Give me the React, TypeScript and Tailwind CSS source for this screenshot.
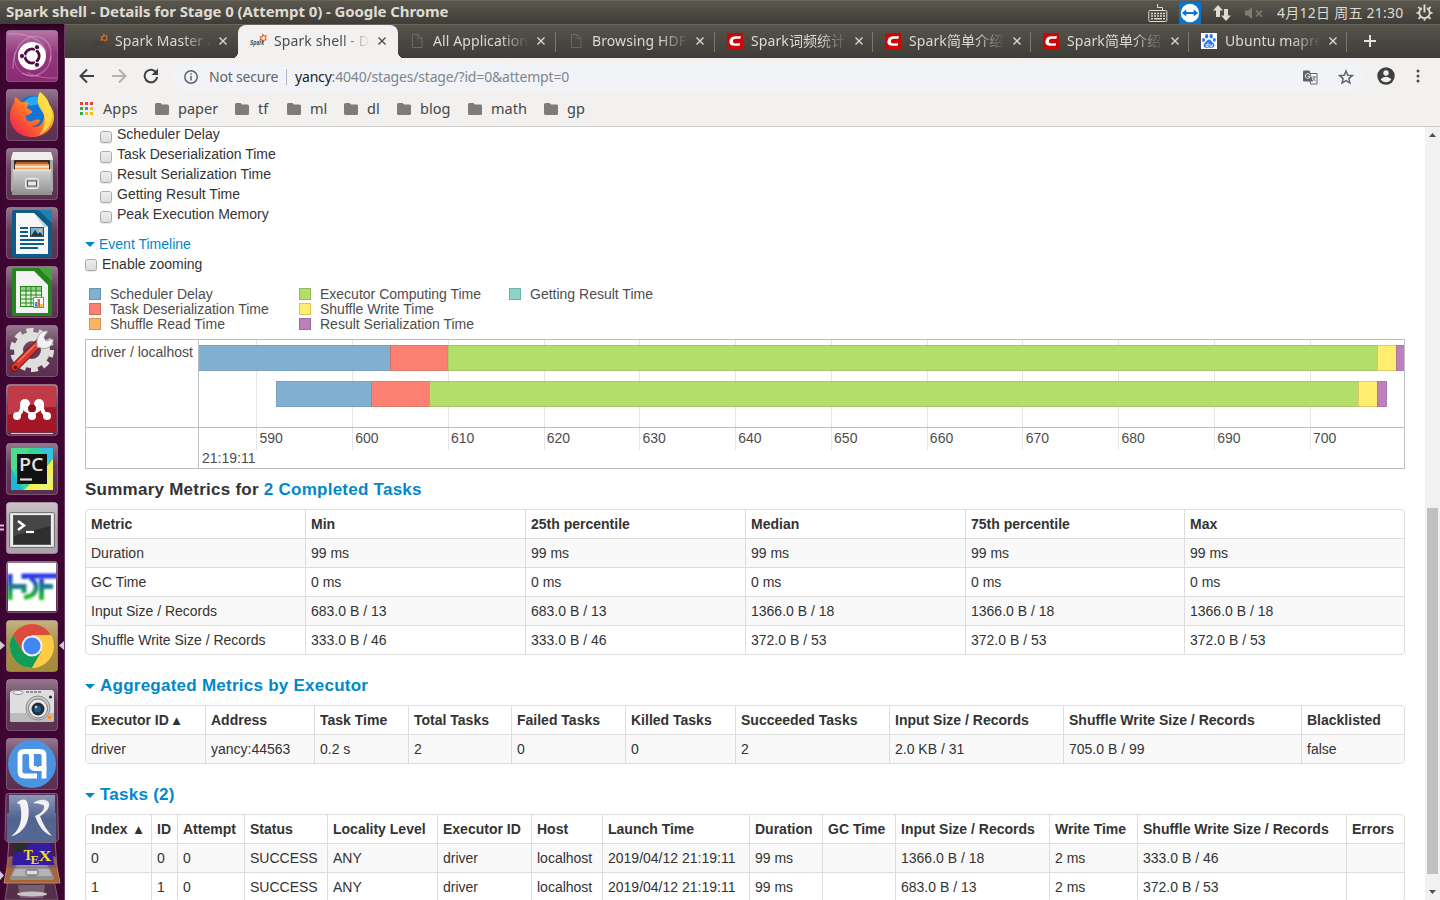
import React from 'react';

const UI = "font-['Noto_Sans','Noto_Sans_CJK_SC',sans-serif]";

/* ---------- Launcher ---------- */

function Tile({ children, fill = '#5b2f50', shine = true }: { children: React.ReactNode; fill?: string; shine?: boolean }) {
  const id = React.useId().replace(/[^a-zA-Z0-9]/g, '');
  return (
    <svg width="52" height="52" viewBox="0 0 52 52" className="block shrink-0">
      <defs>
        <linearGradient id={id} x1="0" y1="0" x2="0" y2="1">
          <stop offset="0" stopColor="#fff" stopOpacity={shine ? 0.35 : 0.1} />
          <stop offset="0.45" stopColor="#fff" stopOpacity="0.06" />
          <stop offset="1" stopColor="#fff" stopOpacity="0" />
        </linearGradient>
      </defs>
      <rect x="0.5" y="0.5" width="51" height="51" rx="3" fill={fill} />
      <rect x="0.5" y="0.5" width="51" height="51" rx="3" fill={`url(#${id})`} stroke="#fff" strokeOpacity="0.25" />
      {children}
    </svg>
  );
}

function UbuntuIcon() {
  return (
    <Tile fill="#8d2b74">
      <g fill="none" stroke="#dba6cd" strokeOpacity="0.45">
        <path d="M7 39C7 12 23 3 36 8c8 4 10 13 8 23" strokeWidth="1.5" />
        <path d="M2 4c18-2 34 5 38 18M16 43c14 8 28-2 29-17" strokeWidth="1.5" />
        <path d="M9 22c-4 16 9 27 24 23M21 42c8 5 16 6 30 6" />
      </g>
      <circle cx="26" cy="26" r="14" fill="#fff" />
      <circle cx="26" cy="26" r="7.2" fill="none" stroke="#4e0c3f" strokeWidth="2.8" />
      <path d="M26 26L12 26M26 26L33 14M26 26L33 38" stroke="#fff" strokeWidth="1.2" />
      <g fill="#4e0c3f" stroke="#fff" strokeWidth="0.9">
        <circle cx="16" cy="26" r="2.6" />
        <circle cx="31" cy="17.2" r="2.6" />
        <circle cx="31" cy="34.8" r="2.6" />
      </g>
    </Tile>
  );
}

function FirefoxIcon() {
  return (
    <Tile>
      <defs>
        <linearGradient id="ffx" x1="1" y1="0" x2="0.1" y2="0.9">
          <stop offset="0" stopColor="#fff44f" />
          <stop offset="0.35" stopColor="#ffb821" />
          <stop offset="0.62" stopColor="#ff6a2b" />
          <stop offset="1" stopColor="#f0264e" />
        </linearGradient>
      </defs>
      <circle cx="27" cy="22" r="15.5" fill="#1273d8" />
      <path d="M18 13c4-5 11-7 17-4l-2 6-8 2z" fill="#2aa7f0" />
      <path d="M34 3c6 5 8 8 9 12 2 3 5 7 5 13 0 12-10 20-22 20C13 48 4 39 4 27c0-6 2-10 4-13l1-6c3 1 4 3 6 5 3 0 6 0 8 1l-2 5 5 3c1 2-3 4-6 4-1 4 2 7 6 6 3-1 5-2 8-1-1 4-5 6-9 6 8 3 14-3 13-12-1-6-6-9-6-15 0-3 1-5 2-7z" fill="url(#ffx)" />
      <path d="M34 3c6 5 8 8 9 12 3 6 4 13 1 20-2 5-6 9-11 11 5-6 8-14 4-22-3-5-6-8-5-14 0-3 1-5 2-7z" fill="#ffe14a" opacity="0.85" />
    </Tile>
  );
}

function FilesIcon() {
  return (
    <Tile>
      <defs>
        <linearGradient id="cab" x1="0" y1="0" x2="0" y2="1">
          <stop offset="0" stopColor="#d2d2d0" />
          <stop offset="1" stopColor="#8f8f8d" />
        </linearGradient>
      </defs>
      <path d="M7 4h38l2 5v34l-2 2H7l-2-2V9z" fill="#a9a9a7" />
      <path d="M7 4h38l2 8H5z" fill="#eeeeec" />
      <path d="M8 12h36v12H8z" fill="#3c2c28" />
      <path d="M10 14h32v3H10z" fill="#b95a2d" />
      <path d="M9 16h34v7H9z" fill="#f0a560" />
      <path d="M9 18h34v1.500H9z" fill="#fff0dc" />
      <path d="M7 22h38l1 25H6z" fill="url(#cab)" />
      <path d="M7 22h38" stroke="#f4f4f4" />
      <rect x="19.500" y="30.500" width="13" height="10" rx="2" fill="#c4c4c2" stroke="#f2f2f2" />
      <rect x="21.500" y="33" width="9" height="5" fill="#e8e8e8" stroke="#555" />
    </Tile>
  );
}

function WriterIcon() {
  return (
    <Tile>
      <path d="M8 3h25l13 13v34H8q-2 0-2-2V5q0-2 2-2z" fill="#0f5c87" />
      <path d="M33 3h13v13z" fill="#1f7fb0" />
      <path d="M10 6h18l14 14v27H10z" fill="#f6f6f6" />
      <path d="M28 6l14 14h-4z" fill="#c4d4de" />
      <g stroke="#0f5c87" strokeWidth="1.800">
        <path d="M14 21h8M14 25h8M14 29h8M14 33h24M14 37h24M14 41h18" />
      </g>
      <rect x="24.500" y="20.500" width="13" height="9" fill="#78b4da" stroke="#24506b" />
      <path d="M25 29l4-6 3 4 2-2 3 4z" fill="#333" />
      <circle cx="34" cy="23.500" r="1.500" fill="#f6c23e" />
    </Tile>
  );
}

function CalcIcon() {
  return (
    <Tile>
      <path d="M8 2h25l13 14v34H8q-2 0-2-2V4q0-2 2-2z" fill="#27851f" />
      <path d="M33 2h13v13z" fill="#42a63a" />
      <path d="M10 5h18l14 14v28H10z" fill="#f3f3f3" />
      <rect x="14.500" y="20.500" width="21" height="20" fill="#ddf4d3" stroke="#27851f" />
      <rect x="15" y="21" width="20" height="4" fill="#8ad07e" />
      <path d="M14 25h22M14 29h22M14 33h22M14 37h22M20 20v21M25 20v21M30 20v21" stroke="#27851f" />
      <rect x="27.500" y="31.500" width="10" height="10" fill="#fff" stroke="#888" />
      <path d="M30 41v-5" stroke="#2a9bd8" strokeWidth="2.500" />
      <path d="M32.800 41v-8" stroke="#e8662a" strokeWidth="2.500" />
      <path d="M35.500 41v-3" stroke="#f2b72a" strokeWidth="2.500" />
    </Tile>
  );
}

function SettingsIcon() {
  return (
    <Tile>
      <circle cx="26" cy="25" r="13.500" fill="none" stroke="#dededc" strokeWidth="9" />
      <circle cx="26" cy="25" r="19.500" fill="none" stroke="#dededc" strokeWidth="5" strokeDasharray="7 5.250" />
      <path d="M8 43L36 15" stroke="#8c1616" strokeWidth="8.500" strokeLinecap="round" />
      <path d="M9 42L32 19" stroke="#d8352c" strokeWidth="6.500" strokeLinecap="round" />
      <path d="M12 37L29 20" stroke="#f07b6e" strokeWidth="1.500" strokeLinecap="round" />
      <circle cx="9.500" cy="42.500" r="1.700" fill="#5c0d0d" />
      <path d="M31 18c-1-7 5-13 11-12l-4 6 2 4 7-2c1 7-7 11-12 9l-4-1z" fill="#f3f3f3" stroke="#9a9a98" strokeWidth="0.800" />
    </Tile>
  );
}

function MendeleyIcon() {
  return (
    <Tile fill="#6b3049">
      <rect x="2" y="2" width="48" height="46" rx="3" fill="#a51727" />
      <path d="M2 5q0-3 3-3h42q3 0 3 3v18Q26 23 2 31z" fill="#c03a47" />
      <path d="M5 49.500h42" stroke="#d8cbd0" />
      <path d="M11 31q5-2 5-8 0-5 4-6M41 31q-5-2-5-8 0-5-4-6" stroke="#fff" strokeWidth="4" fill="none" />
      <circle cx="19" cy="20" r="5" fill="#fff" />
      <circle cx="33" cy="20" r="5" fill="#fff" />
      <path d="M15 20l3 7 8 5 8-5 3-7-6 2-5 5-5-5z" fill="#fff" />
      <circle cx="26" cy="24.500" r="4" fill="#8a101f" />
      <circle cx="11" cy="32" r="4" fill="#fff" />
      <circle cx="26" cy="32" r="4" fill="#fff" />
      <circle cx="41" cy="32" r="4" fill="#fff" />
    </Tile>
  );
}

function PyCharmIcon() {
  return (
    <Tile>
      <path d="M5 5h42v42H5z" fill="#33d3a2" />
      <path d="M5 5h20L5 32z" fill="#4bdc8e" />
      <path d="M5 25l12 22H5z" fill="#1fb7d6" />
      <path d="M34 5h13v20z" fill="#34c1e4" />
      <path d="M47 16v31H18l20-20z" fill="#f6ee4d" />
      <path d="M40 36l7-9v10l-7 10h-12z" fill="#e9f27b" />
      <rect x="11" y="11" width="30" height="30" fill="#111" />
      <text x="13" y="27.500" fontFamily="Open Sans" fontWeight="600" fontSize="17.500" textLength="24.500" lengthAdjust="spacingAndGlyphs" fill="#e0e0e0">PC</text>
      <path d="M14 36.500h12" stroke="#ddd" strokeWidth="2.200" />
    </Tile>
  );
}

function TerminalIcon() {
  return (
    <Tile fill="#aba3a9">
      <rect x="3.500" y="10.500" width="45" height="35" rx="1" fill="#d9d9d9" stroke="#777" />
      <rect x="5" y="12" width="42" height="32" fill="#efefef" />
      <rect x="7.500" y="13.500" width="37" height="29" fill="#2e2e2e" stroke="#555" />
      <path d="M8 14h36v10L8 34z" fill="#464646" />
      <path d="M12 19l6 4.500-6 4.500" fill="none" stroke="#fff" strokeWidth="2.500" />
      <path d="M20 30h8" stroke="#fff" strokeWidth="2.200" />
    </Tile>
  );
}

function HdfIcon() {
  return (
    <Tile>
      <defs>
        <linearGradient id="hdf" gradientUnits="userSpaceOnUse" x1="0" y1="13" x2="0" y2="38">
          <stop offset="0" stopColor="#2c2ff0" />
          <stop offset="0.300" stopColor="#2a55cc" />
          <stop offset="0.550" stopColor="#1f8580" />
          <stop offset="1" stopColor="#22c41c" />
        </linearGradient>
        <filter id="soft" filterUnits="userSpaceOnUse" x="0" y="0" width="52" height="52"><feGaussianBlur stdDeviation="0.800" /></filter>
        <clipPath id="hdfclip"><rect x="2" y="2" width="48" height="48" /></clipPath>
      </defs>
      <rect x="2" y="2" width="48" height="48" fill="#fff" />
      <g clipPath="url(#hdfclip)">
        <g filter="url(#soft)" fill="none" stroke="url(#hdf)" strokeWidth="5">
          <path d="M4 13v26M4 25.500h15M18 23v9" />
          <path d="M15.500 15.100L52 15M18 14v4" />
          <path d="M24 17q6 3 6 9 0 9-12 10.500" strokeWidth="4.500" />
          <path d="M35.500 18v21M35 25.600L47 25.500" />
        </g>
      </g>
    </Tile>
  );
}

function ChromeIcon() {
  return (
    <Tile fill="#a48b3c">
      <circle cx="26" cy="26" r="22" fill="#fbc93c" />
      <path d="M6.900 15A22 22 0 0 1 45 15H26z" fill="#dd4b3e" />
      <path d="M6.900 15L16.500 31.500 26 26V15H7z" fill="#dd4b3e" />
      <path d="M6.900 15A22 22 0 0 0 26 48l9.500-16.500L26 26l-9.500 5.500z" fill="#119d57" />
      <path d="M45 16H26v10l9.500 5.500L26 48A22 22 0 0 0 45 16z" fill="#fecb42" />
      <circle cx="26" cy="26" r="10.500" fill="#f1f1f1" />
      <circle cx="26" cy="26" r="8.500" fill="#4285f4" />
    </Tile>
  );
}

function CameraIcon() {
  return (
    <Tile>
      <path d="M5 12l5-1h35q3 0 3 3v27q0 2-3 2H7q-3 0-3-2V14z" fill="#dedede" />
      <path d="M4 34h44v7q0 2-3 2H7q-3 0-3-2z" fill="#bcbcbc" />
      <path d="M7 14h10M20 13h16" stroke="#777" strokeWidth="1.500" strokeDasharray="3 1" />
      <ellipse cx="12" cy="13.500" rx="5" ry="2" fill="#f4f4f4" stroke="#888" />
      <circle cx="32" cy="29" r="12" fill="#c9c9c9" stroke="#8c8c8c" />
      <circle cx="32" cy="29.500" r="9.500" fill="#e9e9e9" stroke="#777" />
      <circle cx="32" cy="30" r="6.500" fill="#252d38" />
      <circle cx="31.500" cy="30" r="3.500" fill="#245b8e" />
      <circle cx="30" cy="28" r="1.200" fill="#b9dcf5" />
      <circle cx="44.500" cy="18" r="1.500" fill="#222" />
      <rect x="42" y="37" width="3" height="3" fill="#f39422" />
    </Tile>
  );
}

function MLogoIcon() {
  return (
    <Tile>
      <circle cx="26" cy="26" r="24" fill="#4a93e2" />
      <path d="M31 38H18.500Q14 38 14 33.500V17.500Q14 13.500 18 13.500H21.500Q25.500 13.500 25.500 17.500V27.500Q25.500 30.500 28.500 30.500H38V17.500Q38 13.500 34 13.500H21" fill="none" stroke="#fff" strokeWidth="4.800" />
      <path d="M38 28V40.500" stroke="#fff" strokeWidth="4.800" />
      <path d="M32 20v9" stroke="#4a93e2" strokeWidth="2" />
    </Tile>
  );
}

function LauncherStack() {
  return (
    <svg width="64" height="108" viewBox="0 0 64 108" className="block shrink-0">
      <defs>
        <linearGradient id="jr" x1="0" y1="0" x2="0" y2="1">
          <stop offset="0" stopColor="#8c98b8" />
          <stop offset="0.500" stopColor="#52648f" />
          <stop offset="1" stopColor="#556994" />
        </linearGradient>
      </defs>
      <path d="M8 88h46l4 20H5z" fill="#54304d" stroke="#7b5b72" />
      <path d="M18 93h27l-2 13H20z" fill="#75606f" />
      <ellipse cx="32" cy="102" rx="15" ry="2.500" fill="#c9c3c7" />
      <path d="M9 65h46l5 26H4z" fill="#a4643c" stroke="#c2865a" />
      <path d="M16 73h32l6 12v3H10v-3z" fill="#8f8f8d" />
      <path d="M17 73h30l5 11H12z" fill="#b4b4b2" />
      <rect x="26" y="78" width="12" height="5" rx="1.500" fill="#ddd" stroke="#555" />
      <path d="M9 48h46l2 28H7z" fill="#6b405f" fillOpacity="0.350" stroke="#8a6580" />
      <path d="M14 51h37l3 22H12z" fill="#321ca0" />
      <path d="M14 51l18-2-8 9-11 4z" fill="#26302b" />
      <g fontFamily="Liberation Serif" fontWeight="700" fill="#f5db25">
        <text x="23.500" y="68" fontSize="14">T</text>
        <text x="30.500" y="71.500" fontSize="13">E</text>
        <text x="38.500" y="69" fontSize="14" textLength="13" lengthAdjust="spacingAndGlyphs">X</text>
      </g>
      <path d="M8.500 1.500h47q2 0 2 2l1 44-3 3H8l-3-3 1-44q0-2 2.500-2z" fill="#5b2f50" stroke="#81617a" />
      <path d="M9 3h46v18h1v29H7V21h2z" fill="url(#jr)" />
      <path d="M20 8.500q5-2.500 7 1c4 12 2 30-16 35 10-7 12-20 9-32q-3-1-3-2z" fill="#f3f3f3" />
      <path d="M33 11c9-6 18-3 16 3-1 4-5 8-9 10 3 8 6 13 12 20-9-3-13-10-17-20 6-2 10-7 9-10-1-2-5-2-11-3z" fill="#f0f0f0" />
      <path d="M0 79l4 4.500L0 88z" fill="#d4c8d0" />
    </svg>
  );
}

function Launcher() {
  return (
    <aside className="relative flex w-[65px] shrink-0 flex-col overflow-hidden border-r border-[#6b3a62] bg-[#3f0533] shadow-[inset_0_8px_8px_-6px_#1c0217]">
      <div className="flex flex-col items-start gap-[7px] pt-1.5 pl-1.5">
        <UbuntuIcon />
        <FirefoxIcon />
        <FilesIcon />
        <WriterIcon />
        <CalcIcon />
        <SettingsIcon />
        <MendeleyIcon />
        <PyCharmIcon />
        <TerminalIcon />
        <HdfIcon />
        <ChromeIcon />
        <CameraIcon />
        <MLogoIcon />
      </div>
      <div className="mt-0.5">
        <LauncherStack />
      </div>
      <svg className="absolute left-0 top-[498px]" width="5" height="10">
        <path d="M0 3.500h4M0 7.500h4" stroke="#d4c8d0" strokeWidth="2" />
      </svg>
      <svg className="absolute left-0 top-[617px]" width="64" height="10">
        <path d="M0 0l5 4.500L0 9zM64 0l-5 4.500L64 9z" fill="#d4c8d0" />
      </svg>
    </aside>
  );
}

/* ---------- Desktop top panel ---------- */

function TopPanel() {
  return (
    <header className={`flex h-6 shrink-0 items-center justify-between border-t border-[#68645a] bg-linear-to-b from-[#5a574d] to-[#3e3d38] pl-1.5 ${UI}`}>
      <h1 className="mb-[3px] text-[15px] leading-5 font-bold tracking-[-0.09px] whitespace-nowrap text-[#dfdbd2]">
        Spark shell - Details for Stage 0 (Attempt 0) - Google Chrome
      </h1>
      <div className="flex h-[23px] w-[292px] items-center text-[#dfdbd2]">
        <svg width="20" height="20" viewBox="0 0 20 20" fill="none" stroke="currentColor" className="shrink-0">
          <rect x="0.800" y="7.500" width="18" height="11" rx="1" />
          <path d="M3 10.500h14M3 13h14" strokeWidth="1.600" strokeDasharray="2 1" />
          <path d="M3 15.800h2M6 15.800h8M15 15.800h2" strokeWidth="1.600" />
          <path d="M14.500 7.500V4.500h-5V1" />
        </svg>
        <svg width="22" height="22" viewBox="0 0 22 22" className="ml-[11px] shrink-0">
          <rect width="22" height="22" fill="#0c72cf" />
          <circle cx="11" cy="11" r="9.200" fill="#fff" />
          <path d="M2.800 11l4.500-3.500V10h7.400V7.500l4.500 3.500-4.500 3.500V12H7.300v2.500z" fill="#0c72cf" />
        </svg>
        <svg width="18" height="18" viewBox="0 0 18 18" className="ml-3 shrink-0" fill="currentColor">
          <path d="M5 1l5 5.500H7V13H3V6.500H0zM13 17l5-5.500h-3V5h-4v6.500H8z" />
        </svg>
        <svg width="18" height="14" viewBox="0 0 18 14" className="ml-3.5 shrink-0 text-[#7f7c74]" fill="currentColor">
          <path d="M0 4.500h3L7 1v12L3 9.500H0z" />
          <path d="M11 4.500l6 6M17 4.500l-6 6" stroke="currentColor" strokeWidth="1.600" />
        </svg>
        <span className="ml-3.5 w-[139px] text-[14px] leading-[22px] tracking-[0.25px] whitespace-nowrap">4月12日 周五 21:30</span>
        <svg width="17" height="17" viewBox="0 0 17 17" className="shrink-0" fill="none" stroke="currentColor">
          <path d="M5.900 4.200a5.300 5.300 0 1 0 5.200 0" strokeWidth="1.900" />
          <path d="M8.500 0.500v8" strokeWidth="2" />
          <path d="M2.300 2.800l2 2M14.700 2.800l-2 2M0.500 8.800h2.500M14 8.800h2.500M2.500 14.800l2-2M14.500 14.800l-2-2M8.500 14.300v2.500" strokeWidth="1.800" />
        </svg>
      </div>
    </header>
  );
}

/* ---------- Browser chrome ---------- */

function SparkFav() {
  return (
    <svg width="16" height="16" viewBox="0 0 16 16" className="shrink-0 overflow-visible">
      <path d="M10.300 3.800l1.900.2.500-2.500 1.600 1.700 1.700-.4-.6 2.300.8 1.700-2.200.3-1 1.500-.8-1.800-2.200.2 1-1.600z" fill="none" stroke="#e0672f" strokeWidth="1.100" />
      <text x="0" y="12" fontFamily="Liberation Sans" fontStyle="italic" fontWeight="700" fontSize="7.500" textLength="14" lengthAdjust="spacingAndGlyphs" fill="#3f3f3f">Spark</text>
    </svg>
  );
}

function PageFav() {
  return (
    <svg width="16" height="16" viewBox="0 0 16 16" fill="none" stroke="#6b6964" className="shrink-0">
      <path d="M3.500 1.500h6l3.500 3.500v9.500H3.500zM9 1.500V5.500h4" />
    </svg>
  );
}

function CsdnFav() {
  return (
    <svg width="16" height="16" viewBox="0 0 16 16" className="shrink-0">
      <rect width="16" height="16" fill="#ca0606" />
      <path d="M14 3.200l-.7 2.600H9.200Q6.200 5.800 5.900 8T8.400 10.400l4.800-.1-.6 2.500H7.500Q2.200 12.800 2.400 8.400 3 3.200 8.800 3.200z" fill="#fff" />
    </svg>
  );
}

function BaiduFav() {
  return (
    <svg width="16" height="16" viewBox="0 0 16 16" className="shrink-0">
      <rect width="16" height="16" fill="#fff" />
      <g fill="#2a78f0">
        <ellipse cx="5.600" cy="3.200" rx="1.600" ry="2.200" />
        <ellipse cx="10.200" cy="3.200" rx="1.600" ry="2.200" />
        <ellipse cx="2.500" cy="7" rx="1.500" ry="1.900" />
        <ellipse cx="13.300" cy="6.800" rx="1.500" ry="1.900" />
        <path d="M8 6.500c2 0 2.500 2 4 3.300 2.500 2 1.500 5-1 5-1.300 0-2-.3-3-.3s-1.700.3-3 .3c-2.500 0-3.500-3-1-5C5.500 8.500 6 6.500 8 6.500z" />
      </g>
      <path d="M7 9.500v4H5.800q-1 0-1-1t1-1H7M9 11v1.700q0 .8.700.8h1.500V11" fill="none" stroke="#fff" strokeWidth="0.900" />
    </svg>
  );
}

type TabInfo = { title: string; icon: React.ReactNode; width: string; active?: boolean; divider?: boolean };

const tabs: TabInfo[] = [
  { title: 'Spark Master at', icon: <SparkFav />, width: 'w-[159px]' },
  { title: 'Spark shell - De', icon: <SparkFav />, width: 'w-[160px] -mr-px', active: true },
  { title: 'All Applications', icon: <PageFav />, width: 'w-[159px]', divider: true },
  { title: 'Browsing HDFS', icon: <PageFav />, width: 'w-[159px]', divider: true },
  { title: 'Spark词频统计', icon: <CsdnFav />, width: 'w-[158px]', divider: true },
  { title: 'Spark简单介绍', icon: <CsdnFav />, width: 'w-[158px]', divider: true },
  { title: 'Spark简单介绍', icon: <CsdnFav />, width: 'w-[158px]', divider: true },
  { title: 'Ubuntu mapred', icon: <BaiduFav />, width: 'w-[158px]', divider: true },
];

function Tab({ tab }: { tab: TabInfo }) {
  const tone = tab.active ? 'rounded-t-lg bg-[#f2f1f0] text-[#4c4c4c]' : 'text-[#dcd9d1]';
  return (
    <div className={`relative flex h-[34px] shrink-0 items-center pb-px pl-3 ${tab.width} ${tone}`}>
      {tab.icon}
      <span className="ml-2 w-[96px] overflow-hidden mask-r-from-70% mask-r-to-100% text-[14px] leading-5 tracking-[0.1px] whitespace-nowrap">
        {tab.title}
      </span>
      <svg width="8" height="8" viewBox="0 0 8 8" className="ml-[7.5px] shrink-0">
        <path d="M0.500 0.500l7 7M7.500 0.500l-7 7" stroke="currentColor" strokeWidth="1.350" />
      </svg>
      {tab.divider && <i className="absolute top-[7px] right-0 h-5 w-px bg-[#7b786e]" />}
      {tab.active && (
        <>
          <i className="absolute bottom-0 -left-2 size-2 bg-[radial-gradient(circle_at_0_0,transparent_8px,#f2f1f0_8.5px)]" />
          <i className="absolute -right-2 bottom-0 size-2 bg-[radial-gradient(circle_at_100%_0,transparent_8px,#f2f1f0_8.5px)]" />
        </>
      )}
    </div>
  );
}

function TabStrip() {
  return (
    <div className={`flex h-[34px] items-center border-t border-[#6a675d] bg-linear-to-b from-[#57544b] to-[#3e3c38] pl-3.5 ${UI}`}>
      {tabs.map((t, i) => (
        <Tab key={i} tab={t} />
      ))}
      <svg width="12" height="12" viewBox="0 0 12 12" className="mb-px ml-[17px]">
        <path d="M6 0v12M0 6h12" stroke="#e3e0d8" strokeWidth="2" />
      </svg>
    </div>
  );
}

function Toolbar() {
  return (
    <div className={`flex h-[37px] items-center bg-[#f2f1f0] pl-3.5 ${UI}`}>
      <svg width="16" height="16" viewBox="0 0 16 16" fill="none" stroke="#3f3f3f" strokeWidth="2" className="mb-px shrink-0">
        <path d="M15 8H2M8 1.500L1.500 8 8 14.500" />
      </svg>
      <svg width="16" height="16" viewBox="0 0 16 16" fill="none" stroke="#b1b0af" strokeWidth="2" className="mb-px ml-4 shrink-0">
        <path d="M1 8h13M8 1.500L14.500 8 8 14.500" />
      </svg>
      <svg width="16" height="16" viewBox="0 0 16 16" fill="none" stroke="#3f3f3f" strokeWidth="2" className="mb-px ml-4 shrink-0">
        <path d="M13.200 4.500A6.300 6.300 0 1 0 14.200 9" />
        <path d="M15 0.500v6.500H8.500z" fill="#3f3f3f" stroke="none" />
      </svg>
      <div className="mt-px ml-[15px] flex h-7 w-[1190px] shrink-0 items-center rounded-full bg-[#f1f3f6] pl-2.5">
        <svg width="14" height="14" viewBox="0 0 14 14" fill="none" stroke="#5f6368" strokeWidth="1.500" className="shrink-0">
          <circle cx="7" cy="7" r="6.200" />
          <path d="M7 6v4.500M7 3.300v1.500" />
        </svg>
        <span className="ml-[11px] w-[77px] text-[14px] leading-5 tracking-[-0.2px] whitespace-nowrap text-[#5f6368]">Not secure</span>
        <i className="h-4 w-px bg-[#b5b9bf]" />
        <span className="ml-2 grow text-[14px] leading-5 tracking-[-0.18px] whitespace-nowrap text-[#80868b]">
          <b className="font-normal text-[#202124]">yancy</b>:4040/stages/stage/?id=0&amp;attempt=0
        </span>
        <svg width="15" height="15" viewBox="0 0 15 15" className="mr-5 shrink-0">
          <path d="M6 3.500h8v10.500H7.500z" fill="#fff" stroke="#5f6368" />
          <path d="M1 0.500h5.500L10 11.500H1q-1 0-1-1v-9q0-1 1-1z" fill="#5f6368" />
          <path d="M7 4.800A2.400 2.400 0 1 0 7 7V6.200H4.800" fill="none" stroke="#f1f3f6" />
          <path d="M9 7h4M11 6v1M12.300 7q-.8 3-3 4M9.800 8q1 2 3 3.200" fill="none" stroke="#5f6368" strokeWidth="0.800" />
        </svg>
        <svg width="16" height="16" viewBox="0 0 24 24" fill="none" stroke="#5f6368" strokeWidth="2.200" className="mr-2.5 shrink-0">
          <path d="M12 3l2.600 6.300 6.900.6-5.200 4.500 1.600 6.700L12 17.500l-5.900 3.600 1.600-6.700L2.500 9.900l6.900-.6z" />
        </svg>
      </div>
      <svg width="18" height="18" viewBox="0 0 18 18" className="mb-px ml-auto shrink-0">
        <circle cx="9" cy="9" r="8.700" fill="#3f3f3f" />
        <circle cx="9" cy="6" r="2.700" fill="#f2f1f0" />
        <path d="M3.600 12.200Q6 9.700 9 9.700t5.400 2.500Q12.500 15.200 9 15.200t-5.400-3z" fill="#f2f1f0" />
      </svg>
      <svg width="4" height="14" viewBox="0 0 4 14" className="mr-5 mb-px ml-[21px] shrink-0" fill="#4a4a4a">
        <circle cx="2" cy="2" r="1.500" />
        <circle cx="2" cy="7" r="1.500" />
        <circle cx="2" cy="12" r="1.500" />
      </svg>
    </div>
  );
}

const bookmarks = [
  { label: 'paper', width: 'w-[80px]' },
  { label: 'tf', width: 'w-[52px]' },
  { label: 'ml', width: 'w-[57px]' },
  { label: 'dl', width: 'w-[53px]' },
  { label: 'blog', width: 'w-[71px]' },
  { label: 'math', width: 'w-[76px]' },
  { label: 'gp', width: 'w-[60px]' },
];

function BookmarkBar() {
  return (
    <div className={`flex h-8 items-center border-b border-[#cfcdcb] bg-[#f2f1f0] pb-1 pl-[15px] text-[14.5px] leading-5 text-[#464646] ${UI}`}>
      <div className="flex w-[75px] items-center">
        <svg width="13" height="13" viewBox="0 0 13 13" className="shrink-0">
          <path d="M0 0h3v3H0zM5 0h3v3H5zM10 0h3v3h-3z" fill="#ea4335" />
          <path d="M0 5h3v3H0z" fill="#34a853" />
          <path d="M5 5h3v3H5z" fill="#4285f4" />
          <path d="M10 5h3v3h-3z" fill="#fbbc05" />
          <path d="M0 10h3v3H0z" fill="#34a853" />
          <path d="M5 10h3v3H5zM10 10h3v3h-3z" fill="#fbbc05" />
        </svg>
        <span className="-mt-0.5 ml-2.5 tracking-[0.1px]">Apps</span>
      </div>
      {bookmarks.map((b) => (
        <div key={b.label} className={`flex items-center ${b.width}`}>
          <svg width="14" height="12" viewBox="0 0 14 12" className="shrink-0">
            <path d="M1.500 0h4L7 1.500h5.500Q14 1.500 14 3v7.500q0 1.500-1.500 1.500h-11Q0 12 0 10.500v-9Q0 0 1.500 0z" fill="#7d7c7b" />
          </svg>
          <span className="-mt-0.5 ml-[9px]">{b.label}</span>
        </div>
      ))}
    </div>
  );
}

/* ---------- Spark page ---------- */

function Checkbox() {
  return <i className="block size-3 shrink-0 rounded-[2.5px] border border-[#a9a9a9] bg-linear-to-b from-[#eeeeee] to-[#dcdcdc] shadow-[0_1px_1px_#00000018]" />;
}

function Caret({ gap = 'mr-1' }: { gap?: string }) {
  return (
    <svg width="10" height="5" viewBox="0 0 10 5" className={`shrink-0 ${gap}`}>
      <path d="M0 0h10L5 5z" fill="#0088cc" />
    </svg>
  );
}

const metricOptions = ['Scheduler Delay', 'Task Deserialization Time', 'Result Serialization Time', 'Getting Result Time', 'Peak Execution Memory'];

const legend = [
  [
    ['Scheduler Delay', 'bg-[#80b1d3] border-[#6b94b0]'],
    ['Task Deserialization Time', 'bg-[#fb8072] border-[#d26b5f]'],
    ['Shuffle Read Time', 'bg-[#fdb462] border-[#d39651]'],
  ],
  [
    ['Executor Computing Time', 'bg-[#b3de69] border-[#95b957]'],
    ['Shuffle Write Time', 'bg-[#ffed6f] border-[#d5c65c]'],
    ['Result Serialization Time', 'bg-[#bc80bd] border-[#9d6b9e]'],
  ],
  [['Getting Result Time', 'bg-[#8dd3c7] border-[#75b0a6]']],
];

const phases = [
  ['#80b1d3', '#6b94b0'],
  ['#fb8072', '#d26b5f'],
  ['#b3de69', '#95b957'],
  ['#ffed6f', '#d5c65c'],
  ['#bc80bd', '#9d6b9e'],
];

const timelineRows = [
  { y: 6, stops: [113.5, 305.5, 363, 1292.5, 1311.5, 1330] },
  { y: 42, stops: [191.5, 286.5, 344.5, 1273.5, 1292.5, 1301.5] },
];

const ticks = [590, 600, 610, 620, 630, 640, 650, 660, 670, 680, 690, 700];

function Timeline() {
  return (
    <svg width="1320" height="130" viewBox="0 0 1320 130" className="block font-['Liberation_Sans',sans-serif] text-[14px]">
      {ticks.map((t, i) => {
        const left = 171.2 + i * 95.78;
        const x = Math.round(left) + 0.5;
        return (
          <g key={t}>
            <path d={`M${x} 1V111`} stroke="#e5e5e5" />
            <text x={left + 3.2} y="104" fill="#4d4d4d">{t}</text>
          </g>
        );
      })}
      {timelineRows.map((row) =>
        phases.map(([fill, stroke], i) => (
          <rect key={i} x={row.stops[i]} y={row.y + 0.5} width={row.stops[i + 1] - row.stops[i]} height="25" fill={fill} stroke={stroke} strokeOpacity="0.8" />
        )),
      )}
      <text x="6" y="18" fill="#4d4d4d">driver / localhost</text>
      <text x="117" y="124" fill="#4d4d4d">21:19:11</text>
      <path d="M113.500 0v130M0 88.500h1320" stroke="#bfbfbf" />
      <rect x="0.500" y="0.500" width="1319" height="129" fill="none" stroke="#bfbfbf" />
    </svg>
  );
}

function DataTable({ head, rows, cols }: { head: string[]; rows: string[][]; cols: string }) {
  return (
    <table className="mb-5 block w-[1320px] overflow-hidden rounded border border-[#dddddd]">
      <thead className="block">
        <tr className={`grid ${cols}`}>
          {head.map((h) => (
            <th key={h} className="h-7 border-l border-[#dddddd] px-[5px] py-1 text-left leading-5 font-bold whitespace-pre first:border-l-0">
              {h}
            </th>
          ))}
        </tr>
      </thead>
      <tbody className="block">
        {rows.map((r, i) => (
          <tr key={i} className={`grid border-t border-[#dddddd] odd:bg-[#f9f9f9] ${cols}`}>
            {r.map((c, j) => (
              <td key={j} className="h-7 border-l border-[#dddddd] px-[5px] py-1 leading-5 whitespace-nowrap first:border-l-0">
                {c}
              </td>
            ))}
          </tr>
        ))}
      </tbody>
    </table>
  );
}

function SparkPage() {
  return (
    <main className="h-[773px] w-[1360px] overflow-hidden bg-white pl-5 font-['Liberation_Sans',sans-serif] text-[14px] leading-5 text-[#333333]">
      <ul className="-mt-[3px] pl-[15px]">
        {metricOptions.map((m) => (
          <li key={m} className="flex h-5 items-start">
            <span className="pt-[7px]"><Checkbox /></span>
            <span className="ml-[5px]">{m}</span>
          </li>
        ))}
      </ul>
      <div className="mt-2.5 flex h-5 items-center text-[#0088cc]">
        <Caret />
        Event Timeline
      </div>
      <div className="flex h-5 items-center">
        <span className="pt-0.5"><Checkbox /></span>
        <span className="ml-[5px]">Enable zooming</span>
      </div>
      <div className="mt-[13px] mb-[7px] flex h-[45px] pl-1 text-[#4d4d4d]">
        {legend.map((col, i) => (
          <div key={i} className="w-[210px]">
            {col.map(([label, tone]) => (
              <div key={label} className="flex h-[15px] items-center">
                <i className={`mb-px h-3 w-3 border ${tone}`} />
                <span className="ml-[9px] leading-[15px]">{label}</span>
              </div>
            ))}
          </div>
        ))}
      </div>
      <Timeline />
      <h4 className="mt-[11px] mb-[9px] text-[17px] leading-5 font-bold tracking-[0.25px]">
        Summary Metrics for <a className="text-[#0088cc]">2 Completed Tasks</a>
      </h4>
      <DataTable
        cols="grid-cols-[219px_220px_220px_220px_219px_220px]"
        head={['Metric', 'Min', '25th percentile', 'Median', '75th percentile', 'Max']}
        rows={[
          ['Duration', '99 ms', '99 ms', '99 ms', '99 ms', '99 ms'],
          ['GC Time', '0 ms', '0 ms', '0 ms', '0 ms', '0 ms'],
          ['Input Size / Records', '683.0 B / 13', '683.0 B / 13', '1366.0 B / 18', '1366.0 B / 18', '1366.0 B / 18'],
          ['Shuffle Write Size / Records', '333.0 B / 46', '333.0 B / 46', '372.0 B / 53', '372.0 B / 53', '372.0 B / 53'],
        ]}
      />
      <h4 className="mt-[21px] mb-[9px] flex items-center text-[17px] leading-5 font-bold tracking-[0.25px] text-[#0088cc]">
        <Caret gap="mr-[5px]" />
        Aggregated Metrics by Executor
      </h4>
      <DataTable
        cols="grid-cols-[119px_109px_94px_103px_114px_110px_154px_174px_238px_103px]"
        head={['Executor ID ▴', 'Address', 'Task Time', 'Total Tasks', 'Failed Tasks', 'Killed Tasks', 'Succeeded Tasks', 'Input Size / Records', 'Shuffle Write Size / Records', 'Blacklisted']}
        rows={[['driver', 'yancy:44563', '0.2 s', '2', '0', '0', '2', '2.0 KB / 31', '705.0 B / 99', 'false']]}
      />
      <h4 className="mt-[21px] mb-[9px] flex items-center text-[17px] leading-5 font-bold tracking-[0.25px] text-[#0088cc]">
        <Caret gap="mr-[5px]" />
        Tasks (2)
      </h4>
      <DataTable
        cols="grid-cols-[65px_26px_67px_83px_110px_94px_71px_147px_73px_73px_154px_88px_209px_58px]"
        head={['Index  ▴', 'ID', 'Attempt', 'Status', 'Locality Level', 'Executor ID', 'Host', 'Launch Time', 'Duration', 'GC Time', 'Input Size / Records', 'Write Time', 'Shuffle Write Size / Records', 'Errors']}
        rows={[
          ['0', '0', '0', 'SUCCESS', 'ANY', 'driver', 'localhost', '2019/04/12 21:19:11', '99 ms', '', '1366.0 B / 18', '2 ms', '333.0 B / 46', ''],
          ['1', '1', '0', 'SUCCESS', 'ANY', 'driver', 'localhost', '2019/04/12 21:19:11', '99 ms', '', '683.0 B / 13', '2 ms', '372.0 B / 53', ''],
        ]}
      />
    </main>
  );
}

function Scrollbar() {
  return (
    <div className="flex h-[773px] w-[15px] flex-col items-center justify-between bg-[#f1f1f1]">
      <svg width="15" height="15"><path d="M4 10h7L7.500 6z" fill="#505050" /></svg>
      <div className="flex grow flex-col pt-[366px]">
        <i className="block h-[366px] w-[11px] bg-[#c1c1c1]" />
      </div>
      <svg width="15" height="15"><path d="M4 5h7L7.500 9z" fill="#505050" /></svg>
    </div>
  );
}

export default function App() {
  return (
    <div className="flex h-[900px] w-[1440px] flex-col overflow-hidden">
      <TopPanel />
      <div className="flex min-h-0 grow">
        <Launcher />
        <div className="flex w-[1375px] flex-col">
          <TabStrip />
          <Toolbar />
          <BookmarkBar />
          <div className="flex">
            <SparkPage />
            <Scrollbar />
          </div>
        </div>
      </div>
    </div>
  );
}
